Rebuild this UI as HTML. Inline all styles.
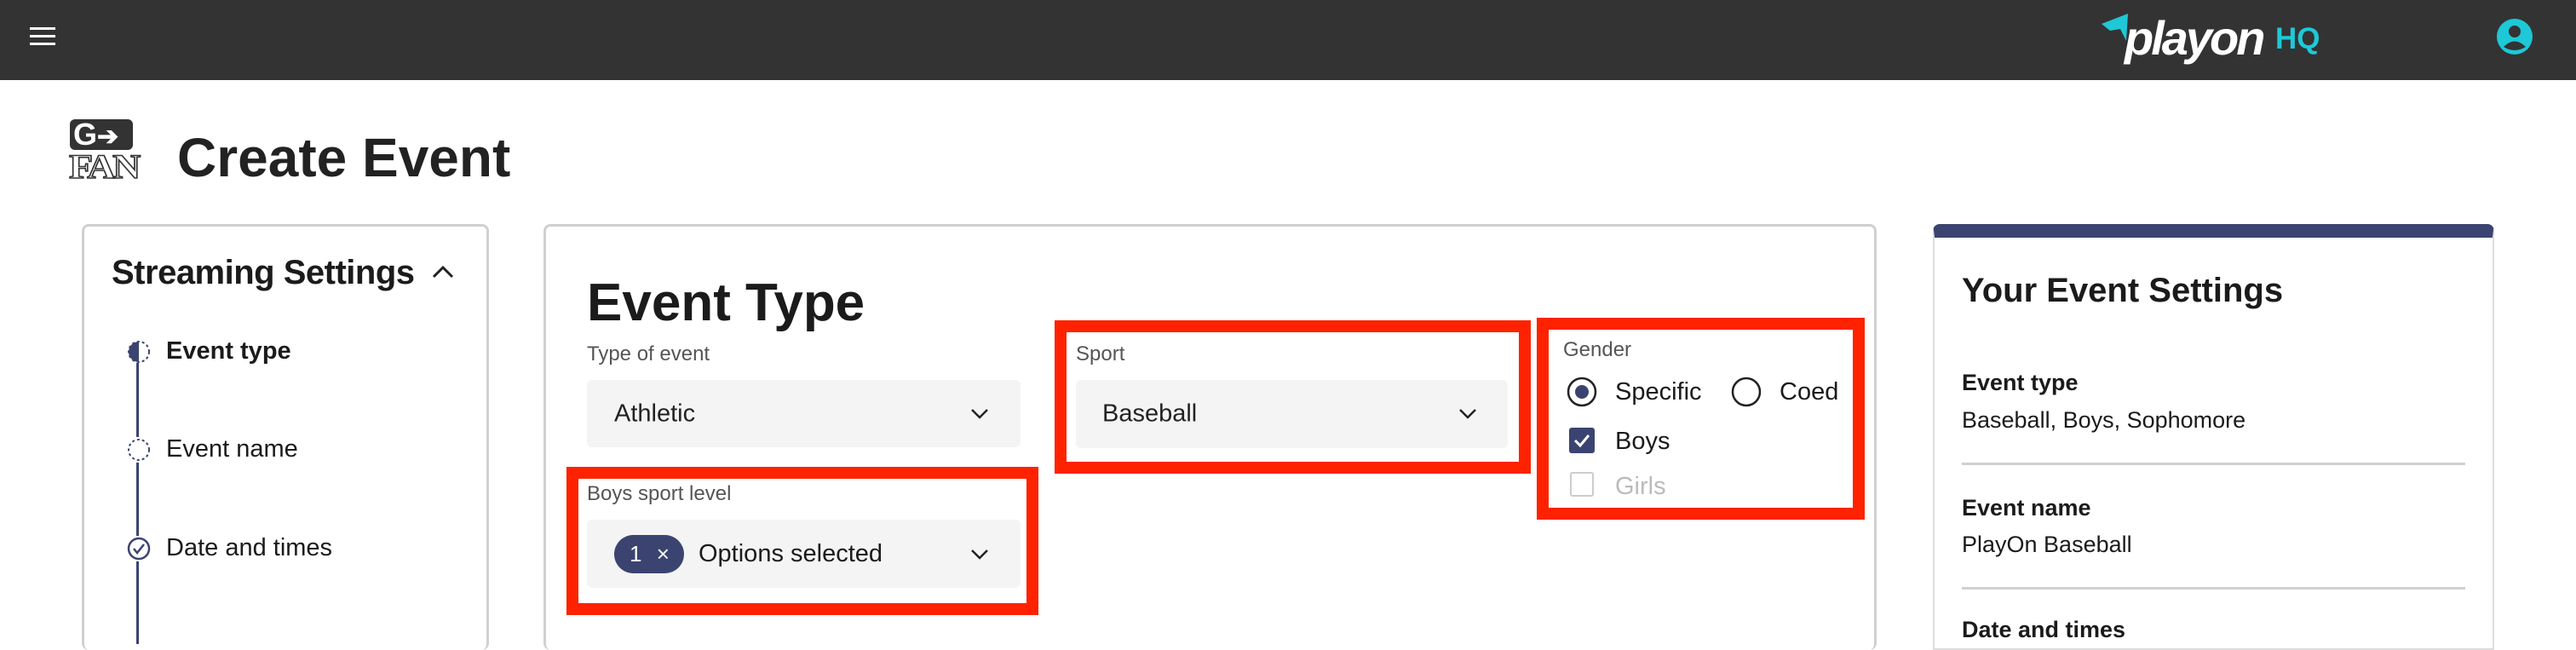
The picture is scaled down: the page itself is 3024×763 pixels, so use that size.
<!DOCTYPE html>
<html><head><meta charset="utf-8"><style>
*{margin:0;padding:0;box-sizing:border-box}
body{width:3024px;height:744px;overflow:hidden;background:#fff;font-family:"Liberation Sans",sans-serif;color:#1b1b1b;position:relative}
.a{position:absolute}
.hdr{left:0;top:0;width:3024px;height:94px;background:#333}
.card{border:3px solid #d0d0d0;border-radius:8px;border-bottom:none;background:#fff}
.lbl{font-size:24px;color:#555}
.sel{background:#f4f4f4;border-radius:6px}
.sel span{position:absolute;font-size:29px;color:#222;top:50%;transform:translateY(-50%)}
.red{border:14px solid #ff2200}
.t29{font-size:29px}
</style></head><body>
<div class="a hdr"></div>
<div class="a" style="left:35px;top:32px;width:30px;height:3px;background:#fff"></div>
<div class="a" style="left:35px;top:41px;width:30px;height:3px;background:#fff"></div>
<div class="a" style="left:35px;top:50px;width:30px;height:3px;background:#fff"></div>
<svg class="a" style="left:2465px;top:14px" width="36" height="38"><polygon points="2,14 33,2 31,34 24,20 12,22" fill="#1ec8d6"/></svg>
<div class="a" style="left:2494px;top:12px;font-size:56px;font-weight:bold;font-style:italic;color:#fff;letter-spacing:-3px">playon</div>
<div class="a" style="left:2671px;top:26px;font-size:35px;font-weight:bold;color:#1ec8d6">HQ</div>
<svg class="a" style="left:2931px;top:22px" width="42" height="42"><circle cx="21" cy="21" r="21" fill="#1ec8d6"/><circle cx="21" cy="15" r="7" fill="#333"/><path d="M8 33 Q21 20 34 33 Q21 41 8 33Z" fill="#333"/></svg>
<div class="a" style="left:82px;top:140px;width:74px;height:36px;background:#333;border-radius:6px;color:#fff;font-weight:bold;font-size:36px;line-height:36px;padding-left:4px">G<span style="font-size:30px">➔</span></div>
<div class="a" style="left:81px;top:172px;font-size:40px;font-weight:bold;color:#fff;-webkit-text-stroke:1.5px #333;letter-spacing:-3px;font-family:'Liberation Serif',serif;transform:scaleX(1.15);transform-origin:left">FAN</div>
<div class="a" style="left:208px;top:148px;font-size:64px;font-weight:bold;color:#222">Create Event</div>

<div class="a card" style="left:96px;top:263px;width:478px;height:500px"></div>
<div class="a" style="left:131px;top:298px;font-size:40px;font-weight:bold;letter-spacing:-0.5px">Streaming Settings</div>
<svg class="a" style="left:506px;top:310px" width="28" height="18"><path d="M3 15 L14 4 L25 15" stroke="#222" stroke-width="3" fill="none"/></svg>
<div class="a" style="left:160px;top:426px;width:3px;height:330px;background:#3b4470"></div>
<svg class="a" style="left:148px;top:398px" width="30" height="30"><path d="M15 3 A12 12 0 0 0 15 27Z" fill="#3b4470"/><circle cx="15" cy="15" r="12" stroke="#3b4470" stroke-width="2" stroke-dasharray="3 3" fill="none"/></svg>
<svg class="a" style="left:148px;top:513px;background:#fff" width="30" height="30"><circle cx="15" cy="15" r="12" stroke="#3b4470" stroke-width="2" stroke-dasharray="3 3" fill="none"/></svg>
<svg class="a" style="left:148px;top:629px;background:#fff" width="30" height="30"><circle cx="15" cy="15" r="12" stroke="#3b4470" stroke-width="2.5" fill="#fff"/><path d="M9 15 L13 20 L21 10" stroke="#3b4470" stroke-width="2.5" fill="none"/></svg>
<div class="a t29" style="left:195px;top:396px;font-weight:bold">Event type</div>
<div class="a t29" style="left:195px;top:511px">Event name</div>
<div class="a t29" style="left:195px;top:627px">Date and times</div>

<div class="a card" style="left:638px;top:263px;width:1565px;height:500px"></div>
<div class="a" style="left:689px;top:320px;font-size:62px;font-weight:bold">Event Type</div>
<div class="a lbl" style="left:689px;top:402px">Type of event</div>
<div class="a sel" style="left:689px;top:446px;width:509px;height:79px"><span style="left:32px">Athletic</span></div>
<svg class="a" style="left:1138px;top:478px" width="24" height="16"><path d="M3 3 L12 12 L21 3" stroke="#222" stroke-width="2.5" fill="none"/></svg>

<div class="a red" style="left:665px;top:548px;width:554px;height:174px"></div>
<div class="a lbl" style="left:689px;top:566px">Boys sport level</div>
<div class="a sel" style="left:689px;top:610px;width:509px;height:80px"></div>
<div class="a" style="left:721px;top:628px;width:82px;height:45px;border-radius:23px;background:#3b4470;color:#fff;font-size:26px;line-height:45px;padding-left:18px">1 <span style="margin-left:10px">×</span></div>
<div class="a t29" style="left:820px;top:634px">Options selected</div>
<svg class="a" style="left:1138px;top:643px" width="24" height="16"><path d="M3 3 L12 12 L21 3" stroke="#222" stroke-width="2.5" fill="none"/></svg>

<div class="a red" style="left:1238px;top:376px;width:559px;height:180px"></div>
<div class="a lbl" style="left:1263px;top:402px">Sport</div>
<div class="a sel" style="left:1263px;top:446px;width:507px;height:80px"><span style="left:31px">Baseball</span></div>
<svg class="a" style="left:1711px;top:478px" width="24" height="16"><path d="M3 3 L12 12 L21 3" stroke="#222" stroke-width="2.5" fill="none"/></svg>

<div class="a red" style="left:1804px;top:373px;width:385px;height:237px"></div>
<div class="a lbl" style="left:1835px;top:397px">Gender</div>
<svg class="a" style="left:1839px;top:442px" width="36" height="36"><circle cx="18" cy="18" r="16" stroke="#222" stroke-width="2.5" fill="#fff"/><circle cx="18" cy="18" r="8" fill="#3b4470"/></svg>
<div class="a t29" style="left:1896px;top:444px">Specific</div>
<svg class="a" style="left:2032px;top:442px" width="36" height="36"><circle cx="18" cy="18" r="16" stroke="#222" stroke-width="2.5" fill="#fff"/></svg>
<div class="a t29" style="left:2089px;top:444px">Coed</div>
<svg class="a" style="left:1842px;top:502px" width="30" height="30"><rect width="30" height="30" rx="3" fill="#3b4470"/><path d="M7 15 L13 21 L23 9" stroke="#fff" stroke-width="3" fill="none"/></svg>
<div class="a t29" style="left:1896px;top:502px">Boys</div>
<div class="a" style="left:1843px;top:554px;width:28px;height:29px;border:2px solid #ccc;border-radius:3px"></div>
<div class="a t29" style="left:1896px;top:555px;color:#bbb">Girls</div>

<div class="a" style="left:2269px;top:263px;width:659px;height:500px;border:2px solid #ddd;border-radius:8px 8px 0 0;border-top:16px solid #3b4470"></div>
<div class="a" style="left:2303px;top:319px;font-size:40px;font-weight:bold">Your Event Settings</div>
<div class="a" style="left:2303px;top:434px;font-size:27px;font-weight:bold">Event type</div>
<div class="a" style="left:2303px;top:478px;font-size:27px">Baseball, Boys, Sophomore</div>
<div class="a" style="left:2303px;top:543px;width:591px;height:3px;background:#d0d0d0"></div>
<div class="a" style="left:2303px;top:581px;font-size:27px;font-weight:bold">Event name</div>
<div class="a" style="left:2303px;top:624px;font-size:27px">PlayOn Baseball</div>
<div class="a" style="left:2303px;top:689px;width:591px;height:3px;background:#d0d0d0"></div>
<div class="a" style="left:2303px;top:724px;font-size:27px;font-weight:bold">Date and times</div>
</body></html>
